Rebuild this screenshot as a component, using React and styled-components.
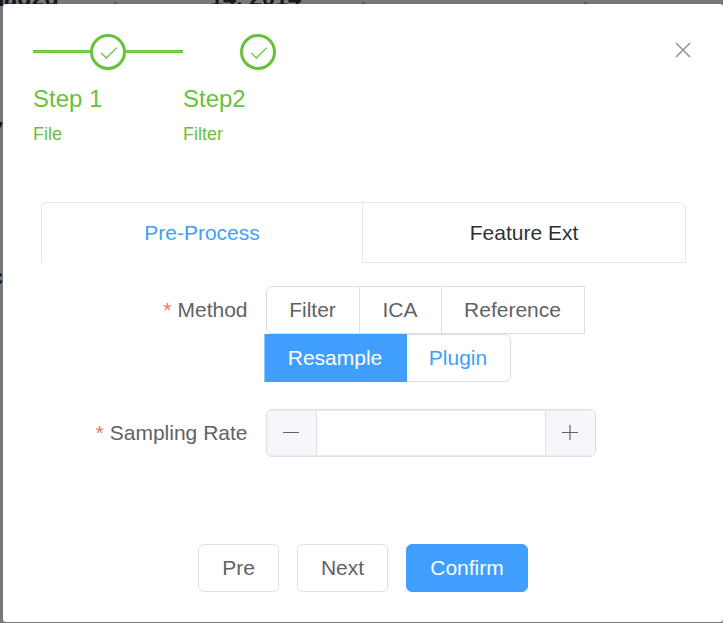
import React from "react";
import styled, { createGlobalStyle } from "styled-components";

const GlobalStyle = createGlobalStyle`
  * { box-sizing: border-box; }
  body { margin: 0; overflow: hidden; font-family: "Liberation Sans", Arial, sans-serif; }
`;

const Overlay = styled.div`
  position: relative;
  width: 723px;
  height: 623px;
  padding: 4px 0 1px 3px;
  overflow: hidden;
  background: #777879;
`;

const Behind = styled.span`
  position: absolute;
  left: ${(p) => p.$x}px;
  top: ${(p) => p.$y}px;
  font-size: 23.4px;
  line-height: 24px;
  font-weight: 700;
  white-space: nowrap;
  color: #15181c;
`;

const SortMark = styled.svg`
  position: absolute;
  left: ${(p) => p.$x}px;
  top: 0;
  width: 5px;
  height: 5px;
`;

const Dialog = styled.section`
  position: relative;
  display: flex;
  flex-direction: column;
  width: 720px;
  height: 618px;
  padding: 30px;
  border-radius: 3px;
  background: #fff;
`;

const Header = styled.header`
  display: flex;
  justify-content: space-between;
  height: 168px;
`;

const Steps = styled.div`
  display: flex;
`;

const Step = styled.div`
  width: 150px;
  color: #67c23a;
`;

const StepHead = styled.div`
  display: flex;
  align-items: center;
  justify-content: center;
  height: 36px;
`;

const StepLine = styled.div`
  flex: 1;
  height: 3px;
  margin-top: -1px;
  border: solid ${(p) => (p.$visible ? "#67c23a" : "transparent")};
  border-width: 1px 0;
  background: ${(p) => (p.$visible ? "#93c47a" : "transparent")};
`;

const StepCircle = styled.div`
  display: grid;
  place-items: center;
  width: 36px;
  height: 36px;
  border: 3px solid #67c23a;
  border-radius: 50%;
`;

const StepTitle = styled.div`
  font-size: 24px;
  line-height: 57px;
`;

const StepDescription = styled.div`
  margin-top: -3px;
  font-size: 18px;
  line-height: 21px;
`;

const CloseButton = styled.button`
  display: grid;
  place-items: center;
  width: 24px;
  height: 24px;
  margin: 4px -2px 0 0;
  padding: 0;
  border: 0;
  background: none;
  color: #909399;
`;

const Tabs = styled.nav`
  display: flex;
  width: 645px;
  height: 61px;
  margin-left: 8px;
`;

const Tab = styled.button`
  width: ${(p) => (p.$active ? 321 : 324)}px;
  padding: 0;
  border: solid #e4e7ed;
  border-width: ${(p) => (p.$active ? "1px 0 0 1px" : "1px")};
  border-radius: ${(p) => (p.$active ? "6px 0 0 0" : "0 6px 0 0")};
  background: #fff;
  font: 21px "Liberation Sans", Arial, sans-serif;
  color: ${(p) => (p.$active ? "#409eff" : "#303133")};
`;

const Form = styled.div`
  display: flex;
  flex-direction: column;
  gap: 27px;
  margin-top: 23px;
`;

const Field = styled.div`
  display: grid;
  grid-template-columns: 214.5px 360px;
  column-gap: 18.5px;
`;

const Label = styled.label`
  font-size: 21px;
  line-height: 48px;
  text-align: right;
  color: #606266;

  &::before {
    content: "*";
    margin-right: 6px;
    color: #f56c6c;
  }
`;

const RadioRow = styled.div`
  display: flex;
  height: 48px;
  margin-left: ${(p) => p.$shift || 0}px;
`;

const Radio = styled.button`
  width: ${(p) => p.$w}px;
  padding: 0 1px 0 0;
  border: solid ${(p) => (p.$checked ? "#409eff" : "#dcdfe6")};
  border-width: 1px 1px 1px ${(p) => (p.$first || p.$checked ? 1 : 0)}px;
  border-left-color: ${(p) => (p.$checked ? "#8cc5ff" : "#dcdfe6")};
  border-radius: ${(p) => p.$radius || 0};
  background: ${(p) => (p.$checked ? "#409eff" : "#fff")};
  font: 21px "Liberation Sans", Arial, sans-serif;
  color: ${(p) => (p.$checked ? "#fff" : p.$hover ? "#409eff" : "#606266")};
`;

const NumberInput = styled.div`
  display: flex;
  width: 330px;
  height: 48px;
  overflow: hidden;
  border: 1px solid #dcdfe6;
  border-radius: 6px;
  box-shadow: inset 0 1px #e8eaef, inset 0 -1px #e8eaef;
`;

const Stepper = styled.button`
  display: grid;
  place-items: center;
  width: 50px;
  height: 44px;
  margin: 1px 0;
  padding: 0 2px 0 0;
  border: solid #dcdfe6;
  border-width: ${(p) => (p.$end ? "0 0 0 1px" : "0 1px 0 0")};
  background: #f5f7fa;
`;

const Value = styled.input`
  flex: 1;
  min-width: 0;
  border: 0;
  background: transparent;
  font: 21px "Liberation Sans", Arial, sans-serif;
  outline: none;
`;

const Footer = styled.footer`
  display: flex;
  justify-content: center;
  gap: 18px;
  margin-top: 87px;
`;

const Button = styled.button`
  width: ${(p) => p.$w}px;
  height: 48px;
  padding: 0;
  border: 1px solid ${(p) => (p.$primary ? "#409eff" : "#dcdfe6")};
  border-radius: 6px;
  background: ${(p) => (p.$primary ? "#409eff" : "#fff")};
  font: 21px "Liberation Sans", Arial, sans-serif;
  color: ${(p) => (p.$primary ? "#fff" : "#606266")};
`;

function StepItem({ title, description, line }) {
  return (
    <Step>
      <StepHead>
        <StepLine $visible={line} />
        <StepCircle>
          <svg width="30" height="30" viewBox="0 0 30 30" fill="none" stroke="#67c23a" strokeWidth="1.3">
            <path d="M8.2 15.9 13.3 21 23.8 10.6" />
          </svg>
        </StepCircle>
        <StepLine $visible={line} />
      </StepHead>
      <StepTitle>{title}</StepTitle>
      <StepDescription>{description}</StepDescription>
    </Step>
  );
}

export default function App() {
  return (
    <>
      <GlobalStyle />
      <Overlay>
        <Behind $x={-10} $y={-14}>nad2d</Behind>
        <Behind $x={210} $y={-14}>14, 2014</Behind>
        <Behind $x={-10} $y={119}>7</Behind>
        <Behind $x={-10} $y={265}>c</Behind>
        {[113, 361, 583].map((x) => (
          <SortMark key={x} $x={x} viewBox="0 0 5 5">
            <path d="M1 2 2.5 2 5 4.5 2.5 4Z" fill="#48494b" />
          </SortMark>
        ))}
        <Dialog>
          <Header>
            <Steps>
              <StepItem title="Step 1" description="File" line />
              <StepItem title="Step2" description="Filter" />
            </Steps>
            <CloseButton aria-label="Close">
              <svg width="24" height="24" viewBox="0 0 24 24" fill="none" stroke="currentColor" strokeWidth="1.5">
                <path d="M5 5 19 19M19 5 5 19" />
              </svg>
            </CloseButton>
          </Header>
          <Tabs>
            <Tab $active>Pre-Process</Tab>
            <Tab>Feature Ext</Tab>
          </Tabs>
          <Form>
            <Field>
              <Label>Method</Label>
              <div>
                <RadioRow>
                  <Radio $w={94} $first $radius="6px 0 0 6px">Filter</Radio>
                  <Radio $w={82}>ICA</Radio>
                  <Radio $w={143}>Reference</Radio>
                </RadioRow>
                <RadioRow $shift={-2}>
                  <Radio $w={143} $checked>Resample</Radio>
                  <Radio $w={104} $hover $radius="0 6px 6px 0">Plugin</Radio>
                </RadioRow>
              </div>
            </Field>
            <Field>
              <Label>Sampling Rate</Label>
              <NumberInput>
                <Stepper aria-label="Decrease">
                  <svg width="18" height="18" viewBox="0 0 18 18" stroke="#606266" strokeWidth="1.2">
                    <path d="M1 8.5H17" />
                  </svg>
                </Stepper>
                <Value aria-label="Sampling Rate" />
                <Stepper $end aria-label="Increase">
                  <svg width="18" height="18" viewBox="0 0 18 18" stroke="#606266" strokeWidth="1.2">
                    <path d="M1 8.5H17M9 1V16" />
                  </svg>
                </Stepper>
              </NumberInput>
            </Field>
          </Form>
          <Footer>
            <Button $w={81}>Pre</Button>
            <Button $w={91}>Next</Button>
            <Button $w={122} $primary>Confirm</Button>
          </Footer>
        </Dialog>
      </Overlay>
    </>
  );
}
